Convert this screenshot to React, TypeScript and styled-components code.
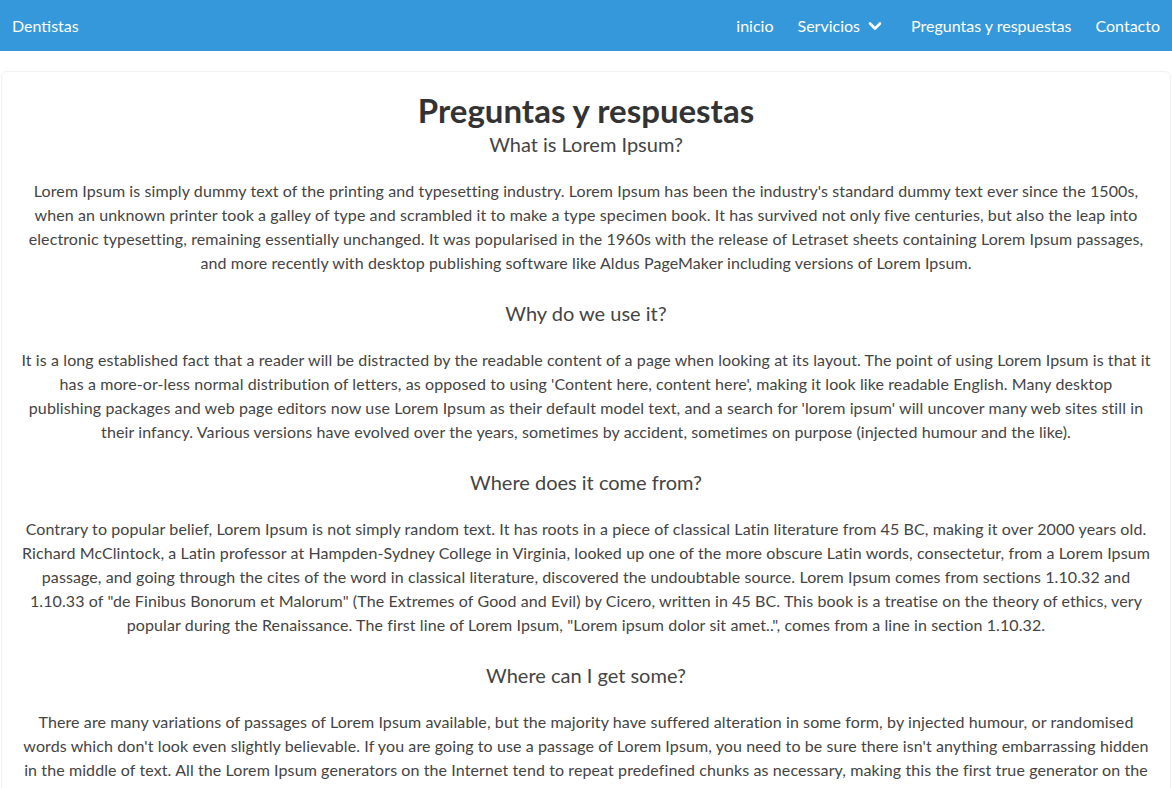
import React from "react";
import styled, { createGlobalStyle } from "styled-components";

const GlobalStyle = createGlobalStyle`
  html, body {
    margin: 0;
    padding: 0;
    background: #fff;
  }
  body {
    font-family: Lato, "Noto Sans", sans-serif;
    color: #444;
  }
`;

const Navbar = styled.nav`
  display: flex;
  align-items: center;
  justify-content: space-between;
  height: 51px;
  padding: 0 12px;
  background: #3498db;
  color: #fff;
`;

const Brand = styled.a`
  font-size: 16px;
  color: #fff;
  text-decoration: none;
`;

const NavList = styled.ul`
  display: flex;
  align-items: center;
  gap: 24px;
  margin: 0;
  padding: 0;
  list-style: none;
`;

const NavLink = styled.a`
  display: flex;
  align-items: center;
  gap: 8px;
  font-size: 16px;
  color: #fff;
  text-decoration: none;

  svg {
    margin-right: 5px;
  }
`;

const Card = styled.main`
  margin: 20px 1px 0;
  padding: 19px 18px 20px;
  border: 1px solid #f1f1f1;
  border-radius: 6px;
  text-align: center;
`;

const Title = styled.h1`
  margin: 0;
  font-size: 33px;
  font-weight: 700;
  line-height: 38px;
  color: #333;
`;

const Subtitle = styled.h4<{ $first?: boolean }>`
  margin: ${(p) => (p.$first ? "3px" : "0")} 0 23px;
  font-size: 20px;
  font-weight: 400;
  line-height: 24px;
  color: #444;
`;

const Paragraph = styled.p`
  margin: 0 0 26px;
  font-size: 16px;
  line-height: 24px;
  letter-spacing: 0.1px;
  white-space: nowrap;
`;

const Chevron = () => (
  <svg width="14" height="10" viewBox="0 0 14 10" fill="none">
    <path d="M2 2.5l5 5 5-5" stroke="#fff" strokeWidth="2.6" strokeLinecap="round" strokeLinejoin="round" />
  </svg>
);

const sections = [
  {
    q: "What is Lorem Ipsum?",
    lines: [
      "Lorem Ipsum is simply dummy text of the printing and typesetting industry. Lorem Ipsum has been the industry's standard dummy text ever since the 1500s,",
      "when an unknown printer took a galley of type and scrambled it to make a type specimen book. It has survived not only five centuries, but also the leap into",
      "electronic typesetting, remaining essentially unchanged. It was popularised in the 1960s with the release of Letraset sheets containing Lorem Ipsum passages,",
      "and more recently with desktop publishing software like Aldus PageMaker including versions of Lorem Ipsum.",
    ],
  },
  {
    q: "Why do we use it?",
    lines: [
      "It is a long established fact that a reader will be distracted by the readable content of a page when looking at its layout. The point of using Lorem Ipsum is that it",
      "has a more-or-less normal distribution of letters, as opposed to using 'Content here, content here', making it look like readable English. Many desktop",
      "publishing packages and web page editors now use Lorem Ipsum as their default model text, and a search for 'lorem ipsum' will uncover many web sites still in",
      "their infancy. Various versions have evolved over the years, sometimes by accident, sometimes on purpose (injected humour and the like).",
    ],
  },
  {
    q: "Where does it come from?",
    lines: [
      "Contrary to popular belief, Lorem Ipsum is not simply random text. It has roots in a piece of classical Latin literature from 45 BC, making it over 2000 years old.",
      "Richard McClintock, a Latin professor at Hampden-Sydney College in Virginia, looked up one of the more obscure Latin words, consectetur, from a Lorem Ipsum",
      "passage, and going through the cites of the word in classical literature, discovered the undoubtable source. Lorem Ipsum comes from sections 1.10.32 and",
      "1.10.33 of \"de Finibus Bonorum et Malorum\" (The Extremes of Good and Evil) by Cicero, written in 45 BC. This book is a treatise on the theory of ethics, very",
      "popular during the Renaissance. The first line of Lorem Ipsum, \"Lorem ipsum dolor sit amet..\", comes from a line in section 1.10.32.",
    ],
  },
  {
    q: "Where can I get some?",
    lines: [
      "There are many variations of passages of Lorem Ipsum available, but the majority have suffered alteration in some form, by injected humour, or randomised",
      "words which don't look even slightly believable. If you are going to use a passage of Lorem Ipsum, you need to be sure there isn't anything embarrassing hidden",
      "in the middle of text. All the Lorem Ipsum generators on the Internet tend to repeat predefined chunks as necessary, making this the first true generator on the",
      "Internet. It uses a dictionary of over 200 Latin words, combined with a handful of model sentence structures, to generate Lorem Ipsum which looks reasonable.",
    ],
  },
];

export default function App() {
  return (
    <>
      <GlobalStyle />
      <Navbar>
        <Brand href="#">Dentistas</Brand>
        <NavList>
          <li><NavLink href="#">inicio</NavLink></li>
          <li><NavLink href="#">Servicios <Chevron /></NavLink></li>
          <li><NavLink href="#">Preguntas y respuestas</NavLink></li>
          <li><NavLink href="#">Contacto</NavLink></li>
        </NavList>
      </Navbar>
      <Card>
        <Title>Preguntas y respuestas</Title>
        {sections.map((s, i) => (
          <React.Fragment key={s.q}>
            <Subtitle $first={i === 0}>{s.q}</Subtitle>
            <Paragraph>
              {s.lines.map((l, j) => (
                <React.Fragment key={j}>
                  {l}
                  {j < s.lines.length - 1 && <br />}
                </React.Fragment>
              ))}
            </Paragraph>
          </React.Fragment>
        ))}
      </Card>
    </>
  );
}
